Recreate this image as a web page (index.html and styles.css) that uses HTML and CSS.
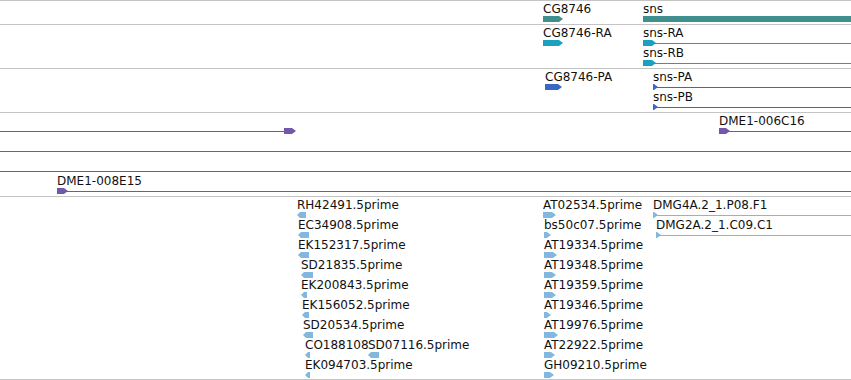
FILE: index.html
```
<!DOCTYPE html>
<html lang="en">
<head>
    <meta charset="UTF-8">
    <meta name="viewport" content="width=device-width, initial-scale=1.0">
    <title>Track view</title>
    <link rel="stylesheet" href="styles.css">
</head>
<body>

    <!-- Track panel -->
    <div class="panel" id="panel"></div>

    <script>
// one row = 20px, label above, glyph below
const ROW = 20;
const RIGHT = 851;

const tracks = [
    { cls: 't-gene', feats: [
        { l: 'CG8746', x: 543, w: 20, d: 'r' },
        { l: 'sns', x: 643, w: 208, d: 'bar' }
    ]},
    { cls: 't-rna', feats: [
        { l: 'CG8746-RA', x: 543, w: 20, d: 'r' },
        { l: 'sns-RA', x: 643, w: 13, d: 'r', end: RIGHT },
        { l: 'sns-RB', x: 643, w: 13, d: 'r', end: RIGHT, row: 1 }
    ]},
    { cls: 't-cds', feats: [
        { l: 'CG8746-PA', x: 545, w: 17, d: 'r' },
        { l: 'sns-PA', x: 653, w: 5, d: 'r', end: RIGHT },
        { l: 'sns-PB', x: 653, w: 5, d: 'r', end: RIGHT, row: 1 }
    ]},
    { cls: 't-bac', feats: [
        { x: 284, w: 12, d: 'r', start: 0 },
        { l: 'DME1-006C16', x: 719, w: 11, d: 'r', end: RIGHT },
        { x: 0, w: 0, start: 0, end: RIGHT, row: 1 },
        { x: 0, w: 0, start: 0, end: RIGHT, row: 2 },
        { l: 'DME1-008E15', x: 57, w: 11, d: 'r', end: RIGHT, row: 3 }
    ]},
    { cls: 't-est', feats: [
        { l: 'RH42491.5prime', x: 297, w: 9, d: 'l', row: 0 },
        { l: 'EC34908.5prime', x: 298, w: 11, d: 'l', row: 1 },
        { l: 'EK152317.5prime', x: 298, w: 11, d: 'l', row: 2 },
        { l: 'SD21835.5prime', x: 301, w: 12, d: 'l', row: 3 },
        { l: 'EK200843.5prime', x: 301, w: 6, d: 'l', row: 4 },
        { l: 'EK156052.5prime', x: 302, w: 7, d: 'l', row: 5 },
        { l: 'SD20534.5prime', x: 303, w: 10, d: 'l', row: 6 },
        { l: 'CO188108', x: 305, w: 5, d: 'l', row: 7 },
        { l: 'SD07116.5prime', x: 368, w: 11, d: 'l', row: 7 },
        { l: 'EK094703.5prime', x: 305, w: 5, d: 'l', row: 8 },

        { l: 'AT02534.5prime', x: 543, w: 13, d: 'r', row: 0 },
        { l: 'bs50c07.5prime', x: 544, w: 7, d: 'r', row: 1 },
        { l: 'AT19334.5prime', x: 544, w: 13, d: 'r', row: 2 },
        { l: 'AT19348.5prime', x: 544, w: 12, d: 'r', row: 3 },
        { l: 'AT19359.5prime', x: 544, w: 12, d: 'r', row: 4 },
        { l: 'AT19346.5prime', x: 544, w: 7, d: 'r', row: 5 },
        { l: 'AT19976.5prime', x: 544, w: 14, d: 'r', row: 6 },
        { l: 'AT22922.5prime', x: 544, w: 11, d: 'r', row: 7 },
        { l: 'GH09210.5prime', x: 544, w: 10, d: 'r', row: 8 },

        { l: 'DMG4A.2_1.P08.F1', x: 653, w: 5, d: 'r', end: RIGHT, row: 0 },
        { l: 'DMG2A.2_1.C09.C1', x: 656, w: 5, d: 'r', end: RIGHT, row: 1 }
    ]}
];

function place(el, left, top, width) {
    el.style.left = left + 'px';
    el.style.top = top + 'px';
    if (width !== undefined) {
        el.style.width = width + 'px';
    }
}

function drawTrack(track) {
    const div = document.createElement('div');
    div.className = 'track ' + track.cls;

    track.feats.forEach(f => {
        const y = (f.row || 0) * ROW;

        if (f.end !== undefined || f.start !== undefined) {
            const line = document.createElement('div');
            line.className = 'line';
            const from = f.start !== undefined ? f.start : f.x;
            const to = f.end !== undefined ? f.end : f.x;
            place(line, from, y + 18, to - from);
            div.appendChild(line);
        }

        if (f.w > 0) {
            const glyph = document.createElement('div');
            glyph.className = 'glyph ' + f.d;
            place(glyph, f.x, y + 15, f.w);
            div.appendChild(glyph);
        }

        if (f.l) {
            const label = document.createElement('span');
            label.className = 'label';
            label.textContent = f.l;
            place(label, f.x, y + 1);
            div.appendChild(label);
        }
    });

    return div;
}

const panel = document.getElementById('panel');
tracks.forEach(t => panel.appendChild(drawTrack(t)));
    </script>
</body>
</html>
```

FILE: styles.css
```
body {
    margin: 0;
    padding: 0;
    background-color: #fff;
    font-family: "DejaVu Sans", sans-serif;
    overflow: hidden;
}

.panel {
    width: 851px;
}

/* each track is a strip with a grey rule on top */
.track {
    position: relative;
    box-sizing: border-box;
    border-top: 1px solid #c4c4c4;
    overflow: hidden;
}

.t-gene { height: 24px; color: #408f8f; }
.t-rna  { height: 44px; color: #1aa1c0; }
.t-cds  { height: 44px; color: #3a68c8; }
.t-bac  { height: 84px; color: #7357a8; }
.t-est  {
    height: 184px;
    color: #82b8df;
    border-bottom: 1px solid #c4c4c4;
}

.label {
    position: absolute;
    font-size: 12px;
    line-height: 14px;
    color: #111;
    white-space: nowrap;
}

.line {
    position: absolute;
    height: 1px;
    background-color: currentColor;
}

.glyph {
    position: absolute;
    height: 6px;
    background-color: currentColor;
}

.glyph.r {
    clip-path: polygon(0 0, calc(100% - 4px) 0, 100% 50%, calc(100% - 4px) 100%, 0 100%);
}

.glyph.l {
    clip-path: polygon(3px 0, 100% 0, 100% 100%, 3px 100%, 0 50%);
}

.glyph.bar {
    height: 6px;
}
```
